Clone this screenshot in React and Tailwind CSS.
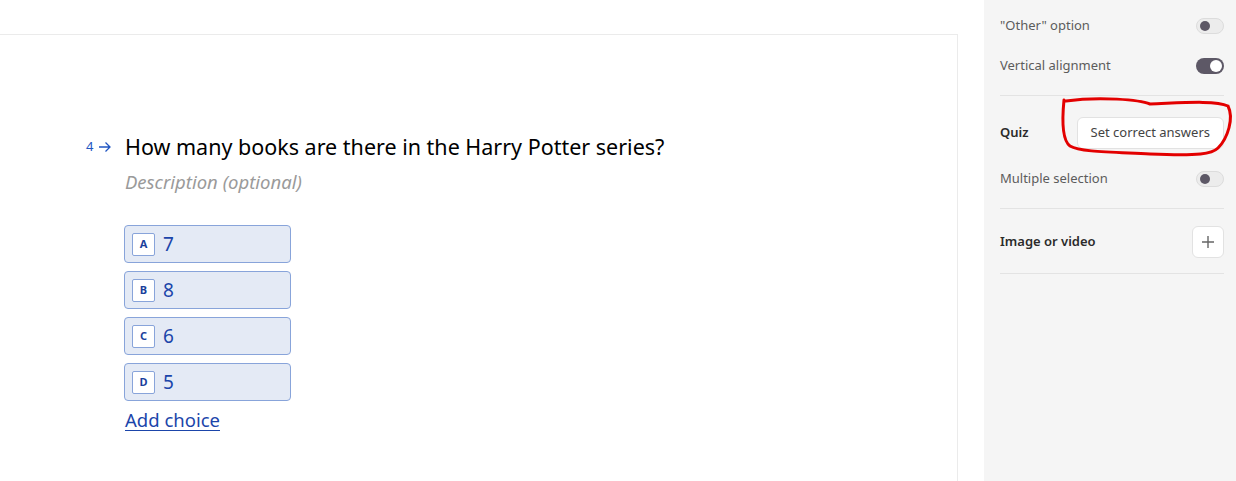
import React from "react";

function Toggle({ on }) {
  return on ? (
    <div className="w-[28px] h-[16px] rounded-full bg-[#5d5866] flex items-center justify-end px-[2px]">
      <div className="w-[12px] h-[12px] rounded-full bg-white" />
    </div>
  ) : (
    <div className="w-[28px] h-[16px] rounded-full bg-[#ececec] border border-[#dcdcdc] flex items-center px-[3px]">
      <div className="w-[10px] h-[10px] rounded-full bg-[#5d5866]" />
    </div>
  );
}

function Choice({ k, v }) {
  return (
    <div className="w-[167px] h-[38px] rounded-[4px] bg-[#e4eaf5] border border-[#88a4da] flex items-center pl-[7px]">
      <div className="w-[23px] h-[23px] rounded-[2px] bg-white border border-[#88a4da] flex items-center justify-center text-[11px] font-bold text-[#1a3f9c]">
        {k}
      </div>
      <span className="ml-[8px] text-[19px] text-[#1b45aa] leading-none">{v}</span>
    </div>
  );
}

export default function App() {
  return (
    <div
      className="w-[1236px] h-[481px] bg-white flex overflow-hidden relative"
      style={{ fontFamily: '"Noto Sans", "Open Sans", sans-serif' }}
    >
      <div className="w-[984px] shrink-0 pt-[34px]">
        <div className="w-[958px] h-[447px] border-t border-r border-[#ebebeb] pl-[86px] pt-[98px]">
          <div className="flex items-center">
            <div className="w-[39px] flex items-center text-[#2156c2] text-[13px]">
              <span>4</span>
              <svg width="14" height="12" viewBox="0 0 14 12" className="ml-[5px]">
                <path d="M1 6h11M7.5 1.5L12 6l-4.5 4.5" fill="none" stroke="#2156c2" strokeWidth="1.3" />
              </svg>
            </div>
            <span className="text-[21.5px] text-black leading-[28px]">
              How many books are there in the Harry Potter series?
            </span>
          </div>
          <div className="pl-[39px] mt-[10px] text-[18.5px] italic text-[#9a9a9a] leading-[22px]">
            Description (optional)
          </div>
          <div className="pl-[38px] mt-[32px] flex flex-col gap-[8px]">
            <Choice k="A" v="7" />
            <Choice k="B" v="8" />
            <Choice k="C" v="6" />
            <Choice k="D" v="5" />
          </div>
          <div className="pl-[39px] mt-[6px] text-[18.5px] text-[#1b45aa] underline underline-offset-[3px] leading-[26px]">
            Add choice
          </div>
        </div>
      </div>
      <div className="flex-1 bg-[#f5f5f5] pl-[16px] pr-[12px] text-[13px]">
        <div className="flex items-center justify-between h-[20px] mt-[16px] text-[#5c5c5c]">
          <span>"Other" option</span>
          <Toggle />
        </div>
        <div className="flex items-center justify-between h-[20px] mt-[20px] text-[#5c5c5c]">
          <span>Vertical alignment</span>
          <Toggle on />
        </div>
        <div className="h-px bg-[#e3e3e3] mt-[19px]" />
        <div className="flex items-center justify-between h-[32px] mt-[21px]">
          <span className="font-semibold text-[#2b2b2b]">Quiz</span>
          <div className="h-[32px] px-[13px] rounded-[6px] bg-white border border-[#e2e2e2] flex items-center text-[#444]">
            Set correct answers
          </div>
        </div>
        <div className="flex items-center justify-between h-[20px] mt-[20px] text-[#5c5c5c]">
          <span>Multiple selection</span>
          <Toggle />
        </div>
        <div className="h-px bg-[#e3e3e3] mt-[19px]" />
        <div className="flex items-center justify-between h-[32px] mt-[17px]">
          <span className="font-semibold text-[#2b2b2b]">Image or video</span>
          <div className="w-[32px] h-[32px] rounded-[6px] bg-white border border-[#e2e2e2] flex items-center justify-center">
            <svg width="14" height="14" viewBox="0 0 14 14">
              <path d="M7 1v12M1 7h12" stroke="#666" strokeWidth="1.4" />
            </svg>
          </div>
        </div>
        <div className="h-px bg-[#e3e3e3] mt-[15px]" />
      </div>
      <svg
        className="absolute left-0 top-0 pointer-events-none"
        width="1236"
        height="481"
        viewBox="0 0 1236 481"
      >
        <path
          d="M1066 101 C1100 96 1140 100 1150 104 C1180 103 1215 100 1228 106 C1234 118 1228 138 1218 148 C1212 154 1200 156 1150 154 C1110 152 1080 152 1070 146 C1062 140 1062 120 1064 100"
          fill="none"
          stroke="#e30000"
          strokeWidth="3"
          strokeLinecap="round"
        />
      </svg>
    </div>
  );
}
